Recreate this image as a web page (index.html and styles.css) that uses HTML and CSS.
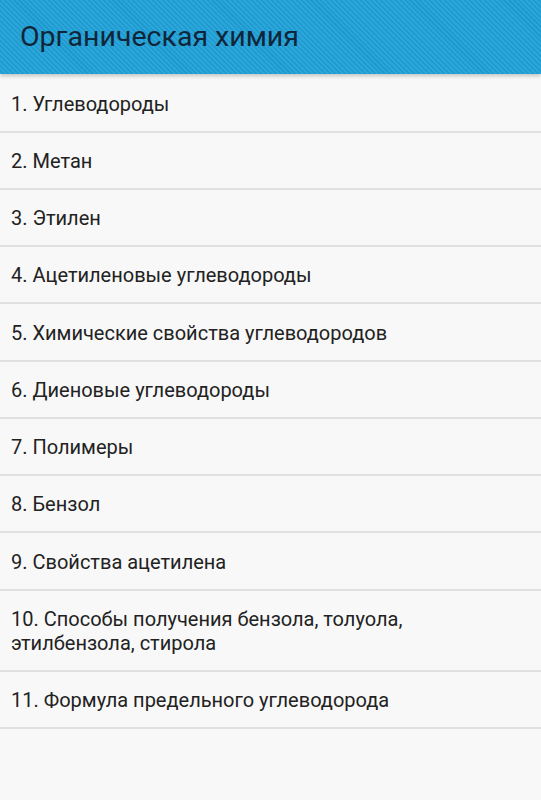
FILE: index.html
```html
<!DOCTYPE html>
<html lang="ru">
<head>
<meta charset="utf-8">
<title>Органическая химия</title>
<link rel="stylesheet" href="styles.css">
</head>
<body>
<header class="appbar">
  <h1 class="title">Органическая химия</h1>
</header>
<ul class="list">
  <li class="item">1. Углеводороды</li>
  <li class="item">2. Метан</li>
  <li class="item">3. Этилен</li>
  <li class="item">4. Ацетиленовые углеводороды</li>
  <li class="item">5. Химические свойства углеводородов</li>
  <li class="item">6. Диеновые углеводороды</li>
  <li class="item">7. Полимеры</li>
  <li class="item">8. Бензол</li>
  <li class="item">9. Свойства ацетилена</li>
  <li class="item">10. Способы получения бензола, толуола, этилбензола, стирола</li>
  <li class="item">11. Формула предельного углеводорода</li>
</ul>
</body>
</html>
```
FILE: styles.css
```css
html, body {
  margin: 0;
  padding: 0;
  background: #f8f8f8;
  font-family: Roboto, "Noto Sans", sans-serif;
}
.appbar {
  position: relative;
  z-index: 1;
  height: 74px;
  display: flex;
  align-items: center;
  padding-left: 20px;
  background-color: #2aa4d9;
  background-image: repeating-linear-gradient(45deg, #2ba6da 0 2px, #2099cf 2px 3.5px);
  box-shadow: 0 2px 4px rgba(0,0,0,0.22);
}
.title {
  margin: 0;
  margin-top: -2px;
  font-size: 28.5px;
  font-weight: 400;
  color: #102638;
}
.list {
  list-style: none;
  margin: 0;
  padding: 0;
}
.item {
  padding: 16.25px 11px 15px;
  font-size: 20px;
  line-height: 24px;
  color: #222;
  border-bottom: 2px solid #e0e0e0;
}
.item:first-child {
  padding-top: 17.5px;
}
```
